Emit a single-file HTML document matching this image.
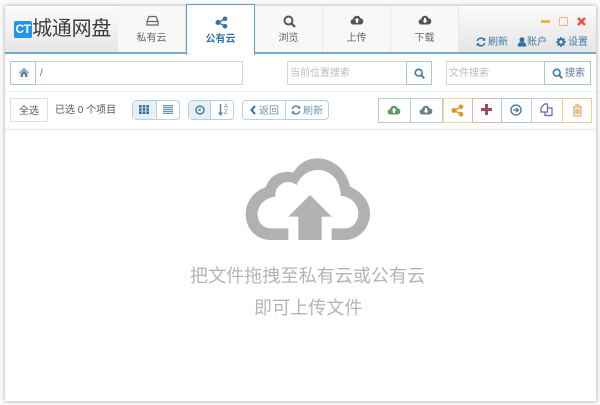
<!DOCTYPE html>
<html><head><meta charset="utf-8">
<style>
*{box-sizing:border-box}
html,body{margin:0;padding:0;width:600px;height:405px;overflow:hidden;background:#fafafa}
body{position:relative;font-family:"Liberation Sans","Noto Sans CJK SC",sans-serif;color:#555}
#w{position:absolute;left:0;top:0;width:600px;height:405px;filter:blur(.35px)}
.a{position:absolute}
svg{position:absolute;display:block}
.t{position:absolute;white-space:nowrap;line-height:1}
.tab{position:absolute;top:6px;height:47px;background:#f8f8f8;border-right:1px solid #e8e8e8}
.tab span{position:absolute;left:0;right:0;top:27px;text-align:center;font-size:10px;line-height:11px;color:#666}
.box{position:absolute;background:#fff;border:1px solid #d2d7db}
.seg{position:absolute;top:100px;height:20px;border:1px solid #b4d2e3;border-radius:4px;background:#fff}
.cell{position:absolute;top:98px;height:25px;background:#fff;border:1px solid}
</style></head><body><div id="w">
<div class="a" style="left:5px;top:6px;width:591px;height:395px;background:#fff;box-shadow:0 0 4px rgba(0,0,0,.35)"></div>

<div class="a" style="left:5px;top:7px;width:113px;height:46px;background:linear-gradient(#fbfbfb,#e6e6e6)"></div>
<div class="a" style="left:14px;top:21px;width:18px;height:17px;background:#2196e8;border-radius:2px;color:#fff;font-size:12px;font-weight:bold;line-height:17px;text-align:center;letter-spacing:-.5px">CT</div>
<div class="t" style="left:32px;top:19px;font-size:20px;color:#3c3c3c;letter-spacing:-.2px">城通网盘</div>

<div class="tab" style="left:118px;width:68px"><span>私有云</span>
<svg style="left:28px;top:9px" width="13" height="12" viewBox="0 0 13 12"><path d="M3 1.500h7l2 5v3.500h-11v-3.500zM1 6.500h11" fill="none" stroke="#666" stroke-width="1.200"/></svg></div>
<div class="tab" style="left:186px;width:69px;top:4px;height:51px;background:#fff;border:1px solid #5b9fc9;border-bottom:0;z-index:3"><span style="top:29px;color:#2f72a8;font-weight:bold">公有云</span>
<svg style="left:28px;top:11px" width="13" height="13" viewBox="0 0 13 13"><path d="M3 6.500L10 3M3 6.500l7 3.500" stroke="#2f72a8" stroke-width="1.400"/><circle cx="3" cy="6.500" r="2.500" fill="#2f72a8"/><circle cx="10" cy="2.800" r="2.300" fill="#2f72a8"/><circle cx="10" cy="10.200" r="2.300" fill="#2f72a8"/></svg></div>
<div class="tab" style="left:255px;width:68px"><span>浏览</span>
<svg style="left:28px;top:9px" width="13" height="13" viewBox="0 0 13 13"><circle cx="5.500" cy="5.500" r="4" fill="none" stroke="#555" stroke-width="1.900"/><path d="M8.500 8.500l3.500 3.500" stroke="#555" stroke-width="2.200"/></svg></div>
<div class="tab" style="left:323px;width:68px"><span>上传</span>
<svg style="left:27px;top:8px" width="14" height="12" viewBox="0 0 14 12"><path d="M3.500 10.500a2.700 2.700 0 0 1-.4-5.400 3.800 3.800 0 0 1 7.300-.9 3.200 3.200 0 0 1 .4 6.300z" fill="#555"/><path d="M7 3.800l2.500 2.700h-1.500v2.500h-2v-2.500h-1.500z" fill="#fff"/></svg></div>
<div class="tab" style="left:391px;width:68px"><span>下载</span>
<svg style="left:27px;top:8px" width="14" height="12" viewBox="0 0 14 12"><path d="M3.500 10.500a2.700 2.700 0 0 1-.4-5.400 3.800 3.800 0 0 1 7.300-.9 3.200 3.200 0 0 1 .4 6.300z" fill="#555"/><path d="M7 9.200l2.500-2.700h-1.500v-2.500h-2v2.500h-1.500z" fill="#fff"/></svg></div>

<div class="a" style="left:459px;top:7px;width:137px;height:46px;background:linear-gradient(#fbfbfb,#e4e4e4)"></div>
<div class="a" style="left:541px;top:20px;width:9px;height:3px;background:#f5b342"></div>
<div class="a" style="left:559px;top:17px;width:9px;height:9px;border:1.500px solid #f0b890;border-radius:1px"></div>
<svg style="left:577px;top:17px" width="9" height="9" viewBox="0 0 9 9"><path d="M1 1l7 7M8 1l-7 7" stroke="#e8523a" stroke-width="2.400"/></svg>

<svg style="left:476px;top:37px" width="10" height="10" viewBox="0 0 10 10"><path d="M1.300 4a3.800 3.800 0 0 1 6.600-1.500M8.700 6a3.800 3.800 0 0 1-6.600 1.500" fill="none" stroke="#2f6f9f" stroke-width="1.500"/><path d="M9.300 .7v3h-3zM.7 9.300v-3h3z" fill="#2f6f9f"/></svg>
<div class="t" style="left:488px;top:38px;font-size:10px;color:#3f7aa6">刷新</div>
<svg style="left:517px;top:37px" width="10" height="10" viewBox="0 0 10 10"><circle cx="5" cy="2.800" r="2.500" fill="#2f6f9f"/><path d="M.8 9.500c0-3 1-4 2.500-4.200h3.400c1.500.2 2.500 1.200 2.500 4.200z" fill="#2f6f9f"/></svg>
<div class="t" style="left:527px;top:38px;font-size:10px;color:#3f7aa6">账户</div>
<svg style="left:556px;top:37px" width="10" height="10" viewBox="0 0 10 10"><circle cx="5" cy="5" r="2.700" fill="none" stroke="#2f6f9f" stroke-width="2"/><path d="M5 0v10M0 5h10M1.500 1.500l7 7M8.500 1.500l-7 7" stroke="#2f6f9f" stroke-width="1.500" stroke-dasharray="1.700 6.600"/></svg>
<div class="t" style="left:568px;top:38px;font-size:10px;color:#3f7aa6">设置</div>

<div class="a" style="left:5px;top:52px;width:591px;height:2px;background:#72add0;z-index:2"></div>

<div class="box" style="left:10px;top:61px;width:233px;height:24px"></div>
<div class="a" style="left:10px;top:61px;width:26px;height:24px;background:#fff;border:1px solid #a8c8dc"></div>
<svg style="left:19px;top:68px" width="10" height="9" viewBox="0 0 10 9"><path d="M5 0L0 4.500l.6.700L5 1.500l4.400 3.700.6-.7zM1.500 5.200V9h2.500V6.500h2V9h2.500V5.200L5 2.300z" fill="#5f88a8"/></svg>
<div class="t" style="left:40px;top:69px;font-size:10px;color:#666">/</div>

<div class="box" style="left:287px;top:61px;width:120px;height:24px"></div>
<div class="t" style="left:290px;top:69px;font-size:10px;color:#bbb">当前位置搜索</div>
<div class="a" style="left:406px;top:61px;width:26px;height:24px;background:#fff;border:1px solid #a8c8dc"></div>
<svg style="left:414px;top:68px" width="11" height="11" viewBox="0 0 11 11"><circle cx="4.700" cy="4.700" r="3.400" fill="none" stroke="#3f7aa6" stroke-width="1.600"/><path d="M7.200 7.200l3 3" stroke="#3f7aa6" stroke-width="1.900"/></svg>

<div class="box" style="left:446px;top:61px;width:99px;height:24px"></div>
<div class="t" style="left:449px;top:69px;font-size:10px;color:#bbb">文件搜索</div>
<div class="a" style="left:544px;top:61px;width:47px;height:24px;background:#fff;border:1px solid #a8c8dc"></div>
<svg style="left:552px;top:68px" width="11" height="11" viewBox="0 0 11 11"><circle cx="4.700" cy="4.700" r="3.400" fill="none" stroke="#3f7aa6" stroke-width="1.600"/><path d="M7.200 7.200l3 3" stroke="#3f7aa6" stroke-width="1.900"/></svg>
<div class="t" style="left:565px;top:69px;font-size:10px;color:#5c7f98">搜索</div>

<div class="a" style="left:5px;top:91px;width:591px;height:1px;background:#f0f0f0"></div>

<div class="box" style="left:10px;top:98px;width:38px;height:24px;border-color:#dedede"></div>
<div class="t" style="left:19px;top:107px;font-size:10px;color:#555">全选</div>
<div class="t" style="left:55px;top:106px;font-size:10px;color:#555">已选 0 个项目</div>

<div class="seg" style="left:132px;width:48px"><div class="a" style="left:0;top:0;width:24px;height:18px;background:#e6f0f6;border-right:1px solid #b4d2e3"></div></div>
<svg style="left:139px;top:105px" width="10" height="9" viewBox="0 0 10 9"><path d="M0 0h2.600v2.600H0zM3.700 0h2.600v2.600H3.700zM7.400 0H10v2.600H7.400zM0 3.200h2.600v2.600H0zM3.700 3.200h2.600v2.600H3.700zM7.400 3.200H10v2.600H7.400zM0 6.400h2.600V9H0zM3.700 6.400h2.600V9H3.700zM7.400 6.400H10V9H7.400z" fill="#2f6f9f"/></svg>
<svg style="left:163px;top:105px" width="10" height="9" viewBox="0 0 10 9"><path d="M0 .5h10M0 2.500h10M0 4.500h10M0 6.500h10M0 8.500h10" stroke="#6d95b0" stroke-width="1.200"/></svg>

<div class="seg" style="left:188px;width:46px"><div class="a" style="left:0;top:0;width:22px;height:18px;background:#e6f0f6;border-right:1px solid #b4d2e3"></div></div>
<svg style="left:195px;top:105px" width="10" height="10" viewBox="0 0 10 10"><circle cx="5" cy="5" r="4" fill="none" stroke="#2f6f9f" stroke-width="1.300"/><path d="M5 2.800V5.300H3.200" fill="none" stroke="#2f6f9f"/></svg>
<svg style="left:218px;top:104px" width="5" height="12" viewBox="0 0 5 12"><path d="M2.500 0v10" stroke="#4f83a8" stroke-width="1.400"/><path d="M0 8.500h5L2.500 12z" fill="#4f83a8"/></svg>
<div class="t" style="left:224px;top:104px;font-size:6px;line-height:6px;color:#4f83a8">A<br>Z</div>

<div class="seg" style="left:242px;width:87px"><div class="a" style="left:42px;top:0;width:1px;height:18px;background:#b4d2e3"></div></div>
<svg style="left:250px;top:105px" width="6" height="10" viewBox="0 0 6 10"><path d="M5 1L1.500 5 5 9" fill="none" stroke="#2f6f9f" stroke-width="2"/></svg>
<div class="t" style="left:259px;top:107px;font-size:10px;color:#6d93ad">返回</div>
<svg style="left:291px;top:105px" width="10" height="10" viewBox="0 0 10 10"><path d="M1.300 4a3.800 3.800 0 0 1 6.600-1.500M8.700 6a3.800 3.800 0 0 1-6.600 1.500" fill="none" stroke="#4f83a8" stroke-width="1.500"/><path d="M9.300 .7v3h-3zM.7 9.300v-3h3z" fill="#4f83a8"/></svg>
<div class="t" style="left:303px;top:107px;font-size:10px;color:#6d93ad">刷新</div>

<div class="cell" style="left:378px;width:33px;border-color:#b2d4a8"></div>
<div class="cell" style="left:410px;width:33px;border-color:#bccad3"></div>
<div class="cell" style="left:443px;width:30px;border-color:#f0d990"></div>
<div class="cell" style="left:472px;width:30px;border-color:#e4afc1"></div>
<div class="cell" style="left:501px;width:31px;border-color:#b0c8de"></div>
<div class="cell" style="left:531px;width:32px;border-color:#cdc4de"></div>
<div class="cell" style="left:562px;width:30px;border-color:#efcd98"></div>

<svg style="left:387px;top:104px" width="14" height="12" viewBox="0 0 14 12"><path d="M3.500 10.500a2.700 2.700 0 0 1-.4-5.400 3.800 3.800 0 0 1 7.300-.9 3.200 3.200 0 0 1 .4 6.300z" fill="#5e9a62"/><path d="M7 3.800l2.500 2.700h-1.500v2.500h-2v-2.500h-1.500z" fill="#fff"/></svg>
<svg style="left:419px;top:104px" width="14" height="12" viewBox="0 0 14 12"><path d="M3.500 10.500a2.700 2.700 0 0 1-.4-5.400 3.800 3.800 0 0 1 7.300-.9 3.200 3.200 0 0 1 .4 6.300z" fill="#6a7f8e"/><path d="M7 9.200l2.500-2.700h-1.500v-2.500h-2v2.500h-1.500z" fill="#fff"/></svg>
<svg style="left:451px;top:104px" width="13" height="13" viewBox="0 0 13 13"><path d="M3 6.500L10 3M3 6.500l7 3.500" stroke="#d99a16" stroke-width="1.400"/><circle cx="3" cy="6.500" r="2.500" fill="#d99a16"/><circle cx="10" cy="2.800" r="2.300" fill="#d99a16"/><circle cx="10" cy="10.200" r="2.300" fill="#d99a16"/></svg>
<svg style="left:481px;top:104px" width="11" height="11" viewBox="0 0 11 11"><path d="M5.500 0v11M0 5.500h11" stroke="#9c4a6c" stroke-width="3"/></svg>
<svg style="left:510px;top:104px" width="12" height="12" viewBox="0 0 12 12"><circle cx="6" cy="6" r="5" fill="none" stroke="#3f6f9a" stroke-width="1.300"/><path d="M3 6h4" stroke="#3f6f9a" stroke-width="1.200"/><path d="M6 3.800L8.400 6 6 8.200" fill="none" stroke="#3f6f9a" stroke-width="1.200"/></svg>
<svg style="left:540px;top:103px" width="13" height="14" viewBox="0 0 13 14"><path d="M1 5l3.500-4h3v8H1zM7.500 5H12v7.500H5V9" fill="none" stroke="#7a5fa6" stroke-width="1.200"/></svg>
<svg style="left:572px;top:104px" width="11" height="13" viewBox="0 0 11 13"><path d="M1 3h9M4 3V1h3v2M2 3v9h7V3M4 5v5M5.500 5v5M7 5v5" fill="none" stroke="#e0ad6c" stroke-width="1.200"/></svg>

<div class="a" style="left:5px;top:129px;width:591px;height:1px;background:#e8e8e8"></div>

<svg style="left:180px;top:145px" width="260" height="180" viewBox="0 0 780 540"><path fill="#b1b1b1" d="M325 285H272C228 285 197 250 197 208C197 170 222 138 258 126C268 92 300 75 340 82C358 55 380 40 412 40C460 40 500 75 510 125C545 140 570 170 570 205C570 250 535 285 495 285H455V250H495C518 250 535 230 535 205C535 175 510 155 482 152C482 105 452 75 412 75C385 75 362 92 350 120C335 108 315 108 300 120C288 130 285 142 287 155C258 158 233 178 233 208C233 232 250 250 272 250H325Z"/><path fill="#b1b1b1" d="M390 150L455 215H425V285H355V215H325Z"/></svg>

<div class="t" style="left:190px;top:267px;font-size:18px;color:#b4b4b4;letter-spacing:.1px">把文件拖拽至私有云或公有云</div>
<div class="t" style="left:254px;top:299px;font-size:18px;color:#b4b4b4;letter-spacing:.1px">即可上传文件</div>
</div></body></html>
